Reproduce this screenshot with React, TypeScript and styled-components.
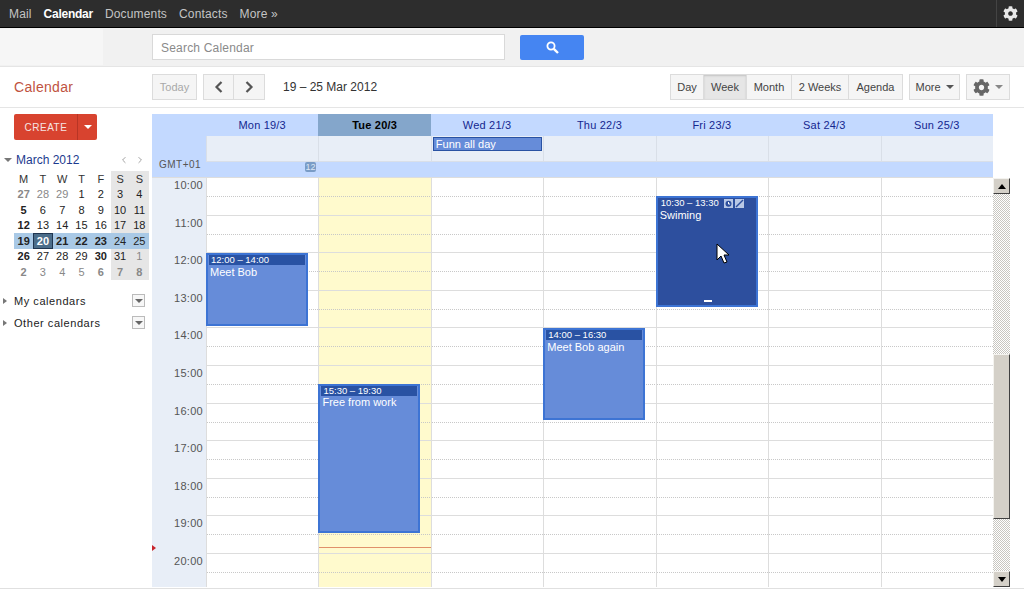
import React from "react";
import styled, { createGlobalStyle } from "styled-components";
import { FaCog } from "react-icons/fa";

const HOUR = 37.6;
const hours = ["10:00", "11:00", "12:00", "13:00", "14:00", "15:00", "16:00", "17:00", "18:00", "19:00", "20:00"];
const days = ["Mon 19/3", "Tue 20/3", "Wed 21/3", "Thu 22/3", "Fri 23/3", "Sat 24/3", "Sun 25/3"];

const miniRows = [
  [["27", "bg"], ["28", "m"], ["29", "m"], ["1", ""], ["2", ""], ["3", ""], ["4", ""]],
  [["5", "b"], ["6", ""], ["7", ""], ["8", ""], ["9", ""], ["10", ""], ["11", ""]],
  [["12", "b"], ["13", ""], ["14", ""], ["15", ""], ["16", ""], ["17", ""], ["18", ""]],
  [["19", "b"], ["20", "t"], ["21", "b"], ["22", "b"], ["23", "b"], ["24", ""], ["25", ""]],
  [["26", "b"], ["27", ""], ["28", ""], ["29", ""], ["30", "b"], ["31", ""], ["1", "m"]],
  [["2", "bg"], ["3", "m"], ["4", "m"], ["5", "m"], ["6", "bg"], ["7", "bg"], ["8", "bg"]],
];

const Global = createGlobalStyle`
  html, body { margin: 0; padding: 0; background: #fff; }
  body { font-family: "Liberation Sans", Arial, sans-serif; }
`;

const Page = styled.div`
  width: 1024px;
  height: 589px;
  box-sizing: border-box;
  overflow: hidden;
  display: flex;
  flex-direction: column;
  border-bottom: 1px solid #e0e0e0;
`;

const TopBar = styled.div`
  height: 27px;
  flex: none;
  display: flex;
  align-items: center;
  padding: 0 6px 0 9px;
  background: #2d2d2d;
  border-bottom: 1px solid #000;
`;

const TopLink = styled.span<{ $active?: boolean }>`
  margin-right: 12px;
  color: ${(p) => (p.$active ? "#fff" : "#c4c4c4")};
  font-size: 12px;
  font-weight: ${(p) => (p.$active ? 700 : 400)};
  letter-spacing: ${(p) => (p.$active ? "-0.25px" : "0.15px")};
`;

const TopGear = styled.div`
  margin-left: auto;
  height: 27px;
  padding-left: 6px;
  display: flex;
  align-items: center;
  border-left: 1px solid #444;
  color: #e8e8e8;
  font-size: 15px;
`;

const SearchBand = styled.div`
  height: 38px;
  flex: none;
  display: flex;
  align-items: center;
  background: #f1f1f1;
  border-bottom: 1px solid #e5e5e5;
`;

const LogoPatch = styled.div`
  width: 103px;
  height: 36px;
  flex: none;
  margin-right: 49px;
  background: #f6f6f6;
`;

const SearchInput = styled.div`
  width: 343px;
  height: 23px;
  padding: 1px 0 0 8px;
  display: flex;
  align-items: center;
  background: #fff;
  border: 1px solid #d9d9d9;
  color: #8a8a8a;
  font-size: 12px;
  letter-spacing: 0.2px;
`;

const SearchButton = styled.div`
  width: 64px;
  height: 25px;
  margin-left: 15px;
  display: flex;
  align-items: center;
  justify-content: center;
  background: #4585f2;
  border-radius: 2px;
`;

const Toolbar = styled.div`
  height: 40px;
  flex: none;
  display: flex;
  align-items: center;
  padding-right: 14px;
  border-bottom: 1px solid #e5e5e5;
`;

const Brand = styled.div`
  width: 138px;
  padding-left: 14px;
  color: #c0533f;
  font-size: 14px;
  letter-spacing: 0.3px;
`;

const ToolButton = styled.div<{ $width: number; $pressed?: boolean; $muted?: boolean; $joined?: boolean }>`
  box-sizing: border-box;
  width: ${(p) => p.$width}px;
  height: 26px;
  margin-left: ${(p) => (p.$joined ? "-1px" : "0")};
  display: flex;
  align-items: center;
  justify-content: center;
  gap: 5px;
  background: ${(p) => (p.$pressed ? "#e6e6e6" : "#f5f5f5")};
  border: 1px solid #dcdcdc;
  box-shadow: ${(p) => (p.$pressed ? "inset 0 1px 2px rgba(0,0,0,.15)" : "none")};
  color: ${(p) => (p.$muted ? "#a8a8a8" : "#444")};
  font-size: 11px;
`;

const ToolGroup = styled.div<{ $gap: number }>`
  display: flex;
  margin-left: ${(p) => p.$gap}px;
`;

const DateRange = styled.div`
  margin-left: 18px;
  color: #333;
  font-size: 12px;
`;

const Spacer = styled.div`
  flex: 1;
`;

const Caret = styled.span<{ $color?: string }>`
  width: 0;
  height: 0;
  border-left: 4px solid transparent;
  border-right: 4px solid transparent;
  border-top: 4px solid ${(p) => p.$color || "#555"};
`;

const Body = styled.div`
  flex: 1;
  display: flex;
  padding: 6px 0 0;
  min-height: 0;
`;

const Sidebar = styled.div`
  width: 152px;
  flex: none;
  box-sizing: border-box;
  padding-left: 14px;
`;

const CreateButton = styled.div`
  width: 83px;
  height: 26px;
  display: flex;
  background: #d8432f;
  border-radius: 2px;
  color: #f5e5e2;
  font-size: 10px;
  letter-spacing: 0.5px;
`;

const CreateLabel = styled.div`
  width: 64px;
  padding-left: 1px;
  box-sizing: border-box;
  display: flex;
  align-items: center;
  justify-content: center;
  border-right: 1px solid #b83525;
`;

const CreateArrow = styled.div`
  flex: 1;
  display: flex;
  align-items: center;
  justify-content: center;
`;

const MiniHead = styled.div`
  height: 16px;
  margin: 12px 0 0 -10px;
  width: 145px;
  display: flex;
  align-items: center;
`;

const MiniTitle = styled.span`
  margin-left: 4px;
  color: #1c3a8e;
  font-size: 12px;
`;

const MiniNav = styled.span`
  margin-left: auto;
  display: flex;
  gap: 8px;
  padding-right: 5px;
`;

const MiniGrid = styled.div`
  position: relative;
  width: 135px;
  margin-top: 3px;
  display: grid;
  grid-template-columns: repeat(7, 1fr);
  grid-auto-rows: 15.5px;
  &::before {
    content: "";
    position: absolute;
    top: 0;
    bottom: 0;
    right: 0;
    width: 38px;
    background: #e6e6e6;
  }
`;

const MiniWeek = styled.div`
  display: contents;
`;

const MiniCell = styled.div<{ $kind?: string; $week?: boolean }>`
  position: relative;
  display: flex;
  align-items: center;
  justify-content: center;
  box-sizing: border-box;
  font-size: 11px;
  font-weight: ${(p) => (p.$kind === "b" || p.$kind === "bg" || p.$kind === "t" ? 700 : 400)};
  color: ${(p) => (p.$kind === "t" ? "#fff" : p.$kind === "m" || p.$kind === "bg" ? "#888" : "#222")};
  background: ${(p) => (p.$kind === "t" ? "#4b6d8a" : p.$week ? "#a9c9e6" : "transparent")};
  border: ${(p) => (p.$kind === "t" ? "1px solid #1f3550" : "none")};
`;

const MiniDow = styled(MiniCell)`
  color: #333;
`;

const CollapseRow = styled.div<{ $first?: boolean }>`
  width: 142px;
  height: 14px;
  margin-top: ${(p) => (p.$first ? "14px" : "8px")};
  margin-left: -11px;
  display: flex;
  align-items: center;
  color: #222;
  font-size: 11px;
  letter-spacing: 0.55px;
`;

const RightTri = styled.span`
  width: 0;
  height: 0;
  margin-right: 7px;
  border-top: 3px solid transparent;
  border-bottom: 3px solid transparent;
  border-left: 4px solid #777;
`;

const MenuBox = styled.span`
  margin-left: auto;
  width: 11px;
  height: 11px;
  display: flex;
  align-items: center;
  justify-content: center;
  background: #f7f7f7;
  border: 1px solid #bbb;
`;

const Pane = styled.div`
  width: 841px;
  flex: none;
  display: flex;
  flex-direction: column;
  background: #e8eef7;
  margin-bottom: 1px;
`;

const HeaderRow = styled.div`
  display: flex;
  background: #c3d9ff;
`;

const Gutter = styled.div`
  width: 54px;
  flex: none;
`;

const DayHead = styled.div<{ $today?: boolean }>`
  flex: 1;
  height: 22px;
  display: flex;
  align-items: center;
  justify-content: center;
  background: ${(p) => (p.$today ? "#84a6cb" : "transparent")};
  color: ${(p) => (p.$today ? "#000" : "#14278f")};
  font-size: 11px;
  font-weight: ${(p) => (p.$today ? 700 : 400)};
  letter-spacing: 0.2px;
`;

const AllDayBlock = styled.div`
  display: flex;
  background: #c3d9ff;
`;

const GmtGutter = styled.div`
  width: 54px;
  height: 41px;
  flex: none;
  box-sizing: border-box;
  padding: 23px 0 0 7px;
  color: #555;
  font-size: 10px;
  letter-spacing: 0.5px;
`;

const AllDayColumns = styled.div`
  position: relative;
  flex: 1;
`;

const AllDayStrip = styled.div`
  display: flex;
  height: 25px;
  background: #e8eef7;
  border-bottom: 1px solid #d9dfe8;
`;

const AllDayCell = styled.div`
  flex: 1;
  position: relative;
  border-left: 1px solid #d9dfe8;
`;

const AllDayEvent = styled.div`
  position: absolute;
  top: 1px;
  left: 1px;
  right: 1px;
  height: 12px;
  padding-left: 2px;
  line-height: 12px;
  background: #668cd9;
  border: 1px solid #2952a3;
  color: #fff;
  font-size: 11px;
`;

const CollapseBadge = styled.div`
  position: absolute;
  right: 677px;
  bottom: 5px;
  width: 11px;
  height: 10px;
  border-radius: 2px;
  background: #7a9cc6;
  color: #dce6f5;
  font-size: 9px;
  line-height: 10px;
  text-align: center;
`;

const GridArea = styled.div`
  position: relative;
  flex: 1;
  display: flex;
  min-height: 0;
  border-top: 1px solid #ddd;
`;

const NowMark = styled.div`
  position: absolute;
  left: 0;
  top: ${HOUR * 9.78 - 1}px;
  width: 0;
  height: 0;
  border-top: 3px solid transparent;
  border-bottom: 3px solid transparent;
  border-left: 4px solid #c8242c;
`;

const TimeGutter = styled.div`
  width: 54px;
  flex: none;
`;

const TimeLabel = styled.div`
  height: ${HOUR}px;
  box-sizing: border-box;
  padding: 1px 3px 0 0;
  text-align: right;
  color: #555;
  font-size: 11px;
  letter-spacing: 0.3px;
`;

const DayColumn = styled.div<{ $today?: boolean }>`
  position: relative;
  flex: 1;
  min-width: 0;
  background: ${(p) => (p.$today ? "#fffacd" : "#fff")};
  border-left: 1px solid #ddd;
`;

const Slot = styled.div`
  height: ${HOUR}px;
  box-sizing: border-box;
  border-bottom: 1px solid #ddd;
  background-image: linear-gradient(to right, #c8c8c8 1px, transparent 1px);
  background-size: 2px 1px;
  background-repeat: repeat-x;
  background-position: 0 18px;
`;

const Event = styled.div<{ $start: number; $span: number; $selected?: boolean }>`
  position: absolute;
  z-index: 2;
  left: -1px;
  width: 102px;
  top: ${(p) => p.$start * HOUR}px;
  height: ${(p) => p.$span * HOUR}px;
  box-sizing: border-box;
  padding: 0 1px;
  background: ${(p) => (p.$selected ? "#2d4f9e" : "#668cd9")};
  border: 2px solid #3d74d4;
  color: #fff;
  font-size: 11px;
`;

const EventTime = styled.div<{ $selected?: boolean }>`
  display: flex;
  align-items: center;
  gap: 5px;
  height: 10px;
  padding-left: 2px;
  line-height: 10px;
  background: ${(p) => (p.$selected ? "transparent" : "#2952a3")};
  font-size: 9.5px;
`;

const EventTitle = styled.div`
  margin-top: 0.5px;
  padding-left: 1px;
`;

const ResizeGrip = styled.div`
  position: absolute;
  bottom: 3px;
  left: 46px;
  width: 8px;
  height: 2px;
  background: #fff;
`;

const Cursor = styled.svg`
  position: absolute;
  left: 58px;
  top: 45px;
`;

const NowLine = styled.div`
  position: absolute;
  z-index: 1;
  left: 0;
  right: 0;
  top: ${HOUR * 9.78 + 1}px;
  height: 1px;
  background: #e0906a;
`;

const Scrollbar = styled.div`
  width: 17px;
  flex: none;
  margin-top: 64px;
  display: flex;
  flex-direction: column;
  height: 409px;
  background: repeating-conic-gradient(#c8c6c0 0 25%, #fff 0 50%) 0 0 / 2px 2px;
`;

const ScrollArrow = styled.div`
  height: 16px;
  flex: none;
  display: flex;
  align-items: center;
  justify-content: center;
  box-sizing: border-box;
  background: #d4d0c8;
  border: 1px solid;
  border-color: #f4f3ef #404040 #404040 #f4f3ef;
`;

const ScrollTrack = styled.div<{ $size: number }>`
  height: ${(p) => p.$size}px;
  flex: none;
`;

const ScrollThumb = styled.div`
  height: 165px;
  flex: none;
  box-sizing: border-box;
  background: #d4d0c8;
  border: 1px solid;
  border-color: #f4f3ef #404040 #404040 #f4f3ef;
`;

const Tri = styled.span<{ $up?: boolean }>`
  width: 0;
  height: 0;
  border-left: 4px solid transparent;
  border-right: 4px solid transparent;
  ${(p) => (p.$up ? "border-bottom: 5px solid #000;" : "border-top: 5px solid #000;")}
`;

const Chevron = ({ left, size = 14, color = "#555" }: { left?: boolean; size?: number; color?: string }) => (
  <svg width={size} height={size} viewBox="0 0 14 14">
    <polyline
      points={left ? "9.5,2 4.5,7 9.5,12" : "4.5,2 9.5,7 4.5,12"}
      fill="none"
      stroke={color}
      strokeWidth={size > 10 ? 2.2 : 1.6}
    />
  </svg>
);

const Magnifier = () => (
  <svg width="13" height="13" viewBox="0 0 13 13">
    <circle cx="5" cy="5" r="3.6" fill="none" stroke="#fff" strokeWidth="1.8" />
    <path d="M7.8 7.8L12 12" stroke="#fff" strokeWidth="2.4" />
  </svg>
);

const TinyIcons = () => (
  <>
    <svg width="9" height="9" viewBox="0 0 9 9">
      <rect width="9" height="9" fill="#b9c8e6" />
      <circle cx="4.5" cy="4.8" r="3" fill="#2d4f9e" />
      <path d="M4.5 3v2h1.6" stroke="#fff" fill="none" />
    </svg>
    <svg width="9" height="9" viewBox="0 0 9 9" style={{ marginLeft: -3 }}>
      <rect width="9" height="9" fill="#b9c8e6" />
      <path d="M1 8L8 1" stroke="#2d4f9e" strokeWidth="1.5" />
    </svg>
  </>
);

export default function App() {
  return (
    <Page>
      <Global />
      <TopBar>
        <TopLink>Mail</TopLink>
        <TopLink $active>Calendar</TopLink>
        <TopLink>Documents</TopLink>
        <TopLink>Contacts</TopLink>
        <TopLink>More »</TopLink>
        <TopGear>
          <FaCog />
        </TopGear>
      </TopBar>

      <SearchBand>
        <LogoPatch />
        <SearchInput>Search Calendar</SearchInput>
        <SearchButton>
          <Magnifier />
        </SearchButton>
      </SearchBand>

      <Toolbar>
        <Brand>Calendar</Brand>
        <ToolButton $width={45} $muted>Today</ToolButton>
        <ToolGroup $gap={6}>
          <ToolButton $width={31}><Chevron left /></ToolButton>
          <ToolButton $width={32} $joined><Chevron /></ToolButton>
        </ToolGroup>
        <DateRange>19 – 25 Mar 2012</DateRange>
        <Spacer />
        <ToolGroup $gap={0}>
          <ToolButton $width={34}>Day</ToolButton>
          <ToolButton $width={44} $joined $pressed>Week</ToolButton>
          <ToolButton $width={46} $joined>Month</ToolButton>
          <ToolButton $width={58} $joined>2 Weeks</ToolButton>
          <ToolButton $width={55} $joined>Agenda</ToolButton>
        </ToolGroup>
        <ToolGroup $gap={6}>
          <ToolButton $width={51}>More <Caret /></ToolButton>
        </ToolGroup>
        <ToolGroup $gap={6}>
          <ToolButton $width={44}>
            <FaCog size={17} color="#666" />
            <Caret $color="#888" />
          </ToolButton>
        </ToolGroup>
      </Toolbar>

      <Body>
        <Sidebar>
          <CreateButton>
            <CreateLabel>CREATE</CreateLabel>
            <CreateArrow><Caret $color="#fff" /></CreateArrow>
          </CreateButton>
          <MiniHead>
            <Caret $color="#777" />
            <MiniTitle>March 2012</MiniTitle>
            <MiniNav>
              <Chevron left size={8} color="#999" />
              <Chevron size={8} color="#999" />
            </MiniNav>
          </MiniHead>
          <MiniGrid>
            {["M", "T", "W", "T", "F", "S", "S"].map((d, i) => (
              <MiniDow key={i}>{d}</MiniDow>
            ))}
            {miniRows.map((row, r) => (
              <MiniWeek key={r}>
                {row.map(([n, kind], c) => (
                  <MiniCell key={c} $kind={kind} $week={r === 3}>{n}</MiniCell>
                ))}
              </MiniWeek>
            ))}
          </MiniGrid>
          <CollapseRow $first>
            <RightTri />My calendars
            <MenuBox><Caret $color="#666" /></MenuBox>
          </CollapseRow>
          <CollapseRow>
            <RightTri />Other calendars
            <MenuBox><Caret $color="#666" /></MenuBox>
          </CollapseRow>
        </Sidebar>

        <Pane>
          <HeaderRow>
            <Gutter />
            {days.map((d, i) => (
              <DayHead key={d} $today={i === 1}>{d}</DayHead>
            ))}
          </HeaderRow>
          <AllDayBlock>
            <GmtGutter>GMT+01</GmtGutter>
            <AllDayColumns>
              <AllDayStrip>
                {days.map((d, i) => (
                  <AllDayCell key={d}>
                    {i === 2 && <AllDayEvent>Funn all day</AllDayEvent>}
                  </AllDayCell>
                ))}
              </AllDayStrip>
              <CollapseBadge>12</CollapseBadge>
            </AllDayColumns>
          </AllDayBlock>
          <GridArea>
            <NowMark />
            <TimeGutter>
              {hours.map((h) => (
                <TimeLabel key={h}>{h}</TimeLabel>
              ))}
            </TimeGutter>
            {days.map((d, i) => (
              <DayColumn key={d} $today={i === 1}>
                {hours.map((h) => (
                  <Slot key={h} />
                ))}
                {i === 0 && (
                  <Event $start={2} $span={1.94}>
                    <EventTime>12:00 – 14:00</EventTime>
                    <EventTitle>Meet Bob</EventTitle>
                  </Event>
                )}
                {i === 1 && (
                  <>
                    <Event $start={5.47} $span={3.96}>
                      <EventTime>15:30 – 19:30</EventTime>
                      <EventTitle>Free from work</EventTitle>
                    </Event>
                    <NowLine />
                  </>
                )}
                {i === 3 && (
                  <Event $start={4} $span={2.44}>
                    <EventTime>14:00 – 16:30</EventTime>
                    <EventTitle>Meet Bob again</EventTitle>
                  </Event>
                )}
                {i === 4 && (
                  <Event $start={0.49} $span={2.95} $selected>
                    <EventTime $selected>10:30 – 13:30 <TinyIcons /></EventTime>
                    <EventTitle>Swiming</EventTitle>
                    <Cursor width="13" height="22" viewBox="0 0 13 22">
                      <path d="M1 1v16l4-4 3 7 3-1-3-7h5z" fill="#fff" stroke="#000" />
                    </Cursor>
                    <ResizeGrip />
                  </Event>
                )}
              </DayColumn>
            ))}
          </GridArea>
        </Pane>

        <Scrollbar>
          <ScrollArrow><Tri $up /></ScrollArrow>
          <ScrollTrack $size={160} />
          <ScrollThumb />
          <ScrollTrack $size={52} />
          <ScrollArrow><Tri /></ScrollArrow>
        </Scrollbar>
      </Body>
    </Page>
  );
}
